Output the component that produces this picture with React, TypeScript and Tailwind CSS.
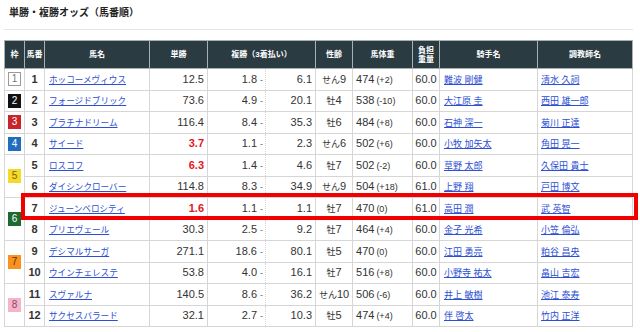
import React from "react";

type Row = {
  no: number;
  frame: number;
  frameSpan?: number;
  name: string;
  win: string;
  hot?: boolean;
  placeLo: string;
  placeHi: string;
  sexAge: string;
  weight: string;
  diff: string;
  load: string;
  jockey: string;
  trainer: string;
};

const rows: Row[] = [
  { no: 1, frame: 1, frameSpan: 1, name: "ホッコーメヴィウス", win: "12.5", placeLo: "1.8", placeHi: "6.1", sexAge: "せん9", weight: "474", diff: "(+2)", load: "60.0", jockey: "難波 剛健", trainer: "清水 久詞" },
  { no: 2, frame: 2, frameSpan: 1, name: "フォージドブリック", win: "73.6", placeLo: "4.9", placeHi: "20.1", sexAge: "牡4", weight: "538", diff: "(-10)", load: "60.0", jockey: "大江原 圭", trainer: "西田 雄一郎" },
  { no: 3, frame: 3, frameSpan: 1, name: "プラチナドリーム", win: "116.4", placeLo: "8.4", placeHi: "35.3", sexAge: "牡6", weight: "484", diff: "(+8)", load: "60.0", jockey: "石神 深一", trainer: "菊川 正達" },
  { no: 4, frame: 4, frameSpan: 1, name: "サイード", win: "3.7", hot: true, placeLo: "1.1", placeHi: "2.3", sexAge: "せん6", weight: "502", diff: "(+6)", load: "60.0", jockey: "小牧 加矢太", trainer: "角田 晃一" },
  { no: 5, frame: 5, frameSpan: 2, name: "ロスコフ", win: "6.3", hot: true, placeLo: "1.4", placeHi: "4.6", sexAge: "牡7", weight: "502", diff: "(-2)", load: "60.0", jockey: "草野 太郎", trainer: "久保田 貴士" },
  { no: 6, frame: 5, name: "ダイシンクローバー", win: "114.8", placeLo: "8.3", placeHi: "34.9", sexAge: "せん9", weight: "504", diff: "(+18)", load: "61.0", jockey: "上野 翔", trainer: "戸田 博文" },
  { no: 7, frame: 6, frameSpan: 2, name: "ジューンベロシティ", win: "1.6", hot: true, placeLo: "1.1", placeHi: "1.1", sexAge: "牡7", weight: "470", diff: "(0)", load: "61.0", jockey: "高田 潤", trainer: "武 英智" },
  { no: 8, frame: 6, name: "プリエヴェール", win: "30.3", placeLo: "2.5", placeHi: "9.2", sexAge: "牡7", weight: "464", diff: "(+4)", load: "60.0", jockey: "金子 光希", trainer: "小笠 倫弘" },
  { no: 9, frame: 7, frameSpan: 2, name: "デシマルサーガ", win: "271.1", placeLo: "18.6", placeHi: "80.1", sexAge: "牡5", weight: "470", diff: "(0)", load: "60.0", jockey: "江田 勇亮", trainer: "粕谷 昌央" },
  { no: 10, frame: 7, name: "ウインチェレステ", win: "53.8", placeLo: "4.0", placeHi: "16.1", sexAge: "牡7", weight: "516", diff: "(+8)", load: "60.0", jockey: "小野寺 祐太", trainer: "畠山 吉宏" },
  { no: 11, frame: 8, frameSpan: 2, name: "スヴァルナ", win: "140.5", placeLo: "8.6", placeHi: "36.2", sexAge: "せん10", weight: "506", diff: "(-6)", load: "60.0", jockey: "井上 敏樹", trainer: "池江 泰寿" },
  { no: 12, frame: 8, name: "サクセスバラード", win: "32.1", placeLo: "2.7", placeHi: "10.3", sexAge: "牡5", weight: "474", diff: "(+4)", load: "60.0", jockey: "伴 啓太", trainer: "竹内 正洋" },
];

const frameStyle: Record<number, string> = {
  1: "bg-white border border-[#9a9a9a] text-[#777]",
  2: "bg-[#111] text-white",
  3: "bg-[#c9232b] text-white",
  4: "bg-[#1f6cc0] text-white",
  5: "bg-[#f5d92b] text-[#7a6400]",
  6: "bg-[#1d6a31] text-white",
  7: "bg-[#f7931e] text-[#5a3300]",
  8: "bg-[#f6b3c9] text-[#80505f]",
};

const td = "h-[21.5px] border border-[#d6d6d6] p-0 align-middle";
const th = "border border-[#a9b0b3] bg-[#2b3b42] p-0 text-[8px] font-bold leading-[9px] text-white";
const link = "text-[#2c4fd4] underline underline-offset-[1px]";

function SexAge({ value }: { value: string }) {
  const m = value.match(/^(\D+)(\d+)$/);
  if (!m) return <>{value}</>;
  return (
    <>
      <span className="text-[9px]">{m[1]}</span>
      {m[2]}
    </>
  );
}

export default function App() {
  return (
    <div
      className="h-[332px] w-[640px] overflow-hidden bg-white text-[#333]"
      style={{ fontFamily: '"Liberation Sans", "Noto Sans CJK JP", sans-serif' }}
    >
      <div className="px-[4px]">
        <h2 className="h-[30px] w-[629px] border-b border-[#e6e6e6] pl-[5px] pt-[6px] text-[10px] font-bold leading-[14px] text-[#222]">
          単勝・複勝オッズ（馬番順）
        </h2>

        <div className="relative mt-[10px] w-[628px]">
          <table className="w-[628px] table-fixed border-collapse text-[11px] leading-none">
            <colgroup>
              <col className="w-[20px]" />
              <col className="w-[20px]" />
              <col className="w-[105px]" />
              <col className="w-[58px]" />
              <col className="w-[58px]" />
              <col className="w-[50px]" />
              <col className="w-[37px]" />
              <col className="w-[60px]" />
              <col className="w-[27px]" />
              <col className="w-[98px]" />
              <col className="w-[95px]" />
            </colgroup>
            <thead>
              <tr className="h-[28px]">
                <th className={th}>枠</th>
                <th className={th}>馬番</th>
                <th className={th}>馬名</th>
                <th className={th}>単勝</th>
                <th className={th} colSpan={2}>
                  複勝（3着払い）
                </th>
                <th className={th}>性齢</th>
                <th className={th}>馬体重</th>
                <th className={th}>
                  負担
                  <br />
                  重量
                </th>
                <th className={th}>騎手名</th>
                <th className={th}>調教師名</th>
              </tr>
            </thead>
            <tbody>
              {rows.map((r) => (
                <tr key={r.no}>
                  {r.frameSpan ? (
                    <td className={td} rowSpan={r.frameSpan}>
                      <div className="flex justify-center">
                        <span
                          className={`flex h-[14px] w-[13px] items-center justify-center text-[10px] leading-none ${frameStyle[r.frame]}`}
                        >
                          {r.frame}
                        </span>
                      </div>
                    </td>
                  ) : null}
                  <td className={`${td} text-center font-bold`}>{r.no}</td>
                  <td className={`${td} pl-[4px]`}>
                    <a className={`${link} text-[8.6px]`} href="#">
                      {r.name}
                    </a>
                  </td>
                  <td className={`${td} pr-[3px] text-right ${r.hot ? "font-bold text-[#e4141b]" : ""}`}>{r.win}</td>
                  <td className={`${td} pr-[2px] text-right [border-right-style:dotted]`}>
                    {r.placeLo}
                    <span className="ml-[3px] text-[9px] text-[#666]">-</span>
                  </td>
                  <td className={`${td} pr-[3px] text-right [border-left-style:dotted]`}>{r.placeHi}</td>
                  <td className={`${td} text-center`}>
                    <SexAge value={r.sexAge} />
                  </td>
                  <td className={`${td} pl-[3px]`}>
                    {r.weight}
                    <span className="ml-[2px] text-[9px]">{r.diff}</span>
                  </td>
                  <td className={`${td} text-center`}>{r.load}</td>
                  <td className={`${td} pl-[4px]`}>
                    <a className={`${link} text-[9px]`} href="#">
                      {r.jockey}
                    </a>
                  </td>
                  <td className={`${td} pl-[3px]`}>
                    <a className={`${link} text-[9px]`} href="#">
                      {r.trainer}
                    </a>
                  </td>
                </tr>
              ))}
            </tbody>
          </table>

          <div className="pointer-events-none absolute left-[17px] top-[153px] h-[27px] w-[617px] border-4 border-[#f20000]" />
        </div>
      </div>
    </div>
  );
}
